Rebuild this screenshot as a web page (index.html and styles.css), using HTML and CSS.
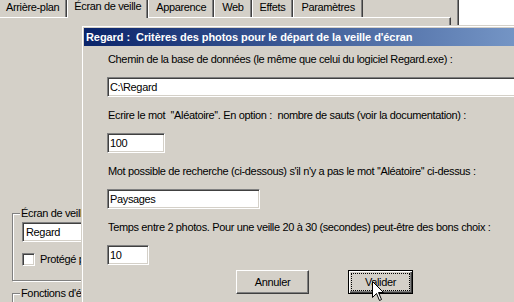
FILE: index.html
```html
<!DOCTYPE html>
<html lang="fr">
<head>
  <meta charset="UTF-8" />
  <title>Propriétés de Affichage</title>
  <link rel="stylesheet" href="styles.css">
</head>
<body>
  <div class="props">
    <div class="tabs">
      <div class="tab first">Arrière-plan</div>
      <div class="tab active">Écran de veille</div>
      <div class="tab">Apparence</div>
      <div class="tab">Web</div>
      <div class="tab">Effets</div>
      <div class="tab">Paramètres</div>
    </div>
    <div class="panel">
      <div class="group saver">
        <div class="group-title">Écran de veille</div>
        <div class="combo">Regard</div>
        <label class="check"><span class="box"></span>Protégé par mot de passe</label>
      </div>
      <div class="group power">
        <div class="group-title">Fonctions d'économie d'énergie</div>
      </div>
    </div>
  </div>
  <div class="desktop"></div>

  <div class="dialog">
    <div class="frame">
      <div class="titlebar">Regard :&nbsp; Critères des photos pour le départ de la veille d'écran</div>
      <div class="dialog-body">
        <p class="prompt">Chemin de la base de données (le même que celui du logiciel Regard.exe) :</p>
        <input class="edit edit-path" type="text" value="C:\Regard" />

        <p class="prompt">Ecrire le mot &nbsp;''Aléatoire''. En option : &nbsp;nombre de sauts (voir la documentation) :</p>
        <input class="edit edit-jumps" type="text" value="100" />

        <p class="prompt">Mot possible de recherche (ci-dessous) s'il n'y a pas le mot ''Aléatoire'' ci-dessus :</p>
        <input class="edit edit-word" type="text" value="Paysages" />

        <p class="prompt">Temps entre 2 photos. Pour une veille 20 à 30 (secondes) peut-être des bons choix :</p>
        <input class="edit edit-delay" type="text" value="10" />

        <div class="buttons">
          <button class="btn">Annuler</button>
          <button class="btn default"><span class="focus">Valider</span></button>
          <!-- mouse pointer over the default button -->
          <svg class="pointer" width="12" height="20" viewBox="0 0 12 20">
            <path d="M0.5 0.5 L0.5 16.5 L4.5 12.5 L7.5 19.5 L9.5 18.5 L6.5 11.5 L11.5 11.5 Z" fill="#fff" stroke="#000" stroke-width="1" />
          </svg>
        </div>
      </div>
    </div>
  </div>
</body>
</html>
```

FILE: styles.css
```css
:root {
  --face: #d4d0c8;
  --shadow: #808080;
  --dark: #404040;
  --light: #ffffff;
}
* {
  box-sizing: border-box;
  margin: 0;
  padding: 0;
}
body {
  position: relative;
  display: flex;
  align-items: flex-start;
  width: 514px;
  height: 302px;
  overflow: hidden;
  background-color: var(--face);
  font-family: "Liberation Sans", Arial, sans-serif;
  font-size: 11px;
  letter-spacing: -0.35px;
  color: #000;
}

/* display properties window behind the dialog */
.props {
  width: 459px;
  height: 302px;
  flex-shrink: 0;
  padding-right: 7px;
  border-right: 1px solid var(--dark);
  box-shadow: inset -1px 0 var(--shadow);
}
.desktop {
  flex: 1;
  height: 26px;
  background-color: var(--light);
}
.tabs {
  display: flex;
  align-items: flex-end;
  height: 17px;
}
.tab {
  height: 22px;
  padding: 6px 7px 0;
  line-height: 13px;
  white-space: nowrap;
  border-left: 1px solid var(--light);
  border-right: 1px solid var(--dark);
  box-shadow: inset -1px 0 var(--shadow);
}
.tab.first {
  margin-left: -2px;
}
.tab.active {
  position: relative;
  z-index: 1;
  height: 25px;
  margin-bottom: -1px;
  padding: 7px 6px 0;
  background-color: var(--face);
}
.panel {
  height: 285px;
  padding-top: 195px;
  border-top: 1px solid var(--light);
  border-right: 1px solid var(--dark);
  box-shadow: inset -1px 0 var(--shadow);
}
.group {
  width: 300px;
  margin-left: 12px;
  border: 1px solid var(--shadow);
  box-shadow: inset 1px 1px var(--light), 1px 1px var(--light);
}
.group-title {
  width: max-content;
  margin: -7px 0 0 7px;
  padding: 0 1px;
  line-height: 13px;
  background-color: var(--face);
}
.saver {
  height: 68px;
}
.power {
  height: 40px;
  margin-top: 12px;
}
.combo {
  width: 200px;
  height: 20px;
  margin: 2px 0 0 9px;
  padding-left: 3px;
  line-height: 18px;
  background-color: var(--light);
  border: 1px solid;
  border-color: var(--shadow) var(--light) var(--light) var(--shadow);
  box-shadow: inset 1px 1px var(--dark), inset -1px -1px var(--face);
}
.check {
  display: flex;
  align-items: center;
  gap: 5px;
  margin: 11px 0 0 9px;
  line-height: 13px;
}
.box {
  width: 13px;
  height: 13px;
  background-color: var(--light);
  border: 1px solid;
  border-color: var(--shadow) var(--light) var(--light) var(--shadow);
  box-shadow: inset 1px 1px var(--dark), inset -1px -1px var(--face);
}

/* Regard dialog */
.dialog {
  position: absolute;
  left: 81px;
  top: 25px;
  width: 640px;
  height: 330px;
  background-color: var(--face);
  border: 1px solid;
  border-color: var(--face) var(--dark) var(--dark) var(--face);
}
.frame {
  height: 100%;
  padding: 1px;
  border: 1px solid;
  border-color: var(--light) var(--shadow) var(--shadow) var(--light);
}
.titlebar {
  height: 18px;
  padding-left: 2px;
  line-height: 18px;
  font-weight: bold;
  letter-spacing: -0.07px;
  color: var(--light);
  white-space: nowrap;
  background: linear-gradient(to right, #0a246a, #a6caf0);
}
.dialog-body {
  padding: 7px 0 0 23px;
}
.prompt {
  padding-left: 1px;
  line-height: 13px;
  margin-bottom: 11px;
  white-space: nowrap;
}
.edit {
  display: block;
  height: 20px;
  margin-bottom: 12px;
  padding: 0 2px;
  font: inherit;
  letter-spacing: inherit;
  color: #000;
  background-color: var(--light);
  border: 1px solid;
  border-color: var(--shadow) var(--light) var(--light) var(--shadow);
  box-shadow: inset 1px 1px var(--dark), inset -1px -1px var(--face);
  outline: none;
}
.edit-path { width: 560px; }
.edit-jumps { width: 58px; }
.edit-word { width: 153px; }
.edit-delay { width: 42px; margin-bottom: 5px; }

.buttons {
  position: relative;
  display: flex;
  gap: 39px;
  padding-left: 129px;
}
.btn {
  width: 73px;
  height: 24px;
  font: inherit;
  letter-spacing: inherit;
  color: #000;
  background-color: var(--face);
  border: 1px solid;
  border-color: var(--light) var(--dark) var(--dark) var(--light);
  box-shadow: inset -1px -1px var(--shadow);
}
.btn.default {
  width: 65px;
  border: 1px solid #000;
  box-shadow: inset 1px 1px var(--light), inset -1px -1px var(--dark), inset -2px -2px var(--shadow);
  padding: 2px;
}
.focus {
  display: flex;
  align-items: center;
  justify-content: center;
  height: 100%;
  border: 1px dotted #000;
}
.pointer {
  position: absolute;
  left: 265px;
  top: 11px;
}
```
